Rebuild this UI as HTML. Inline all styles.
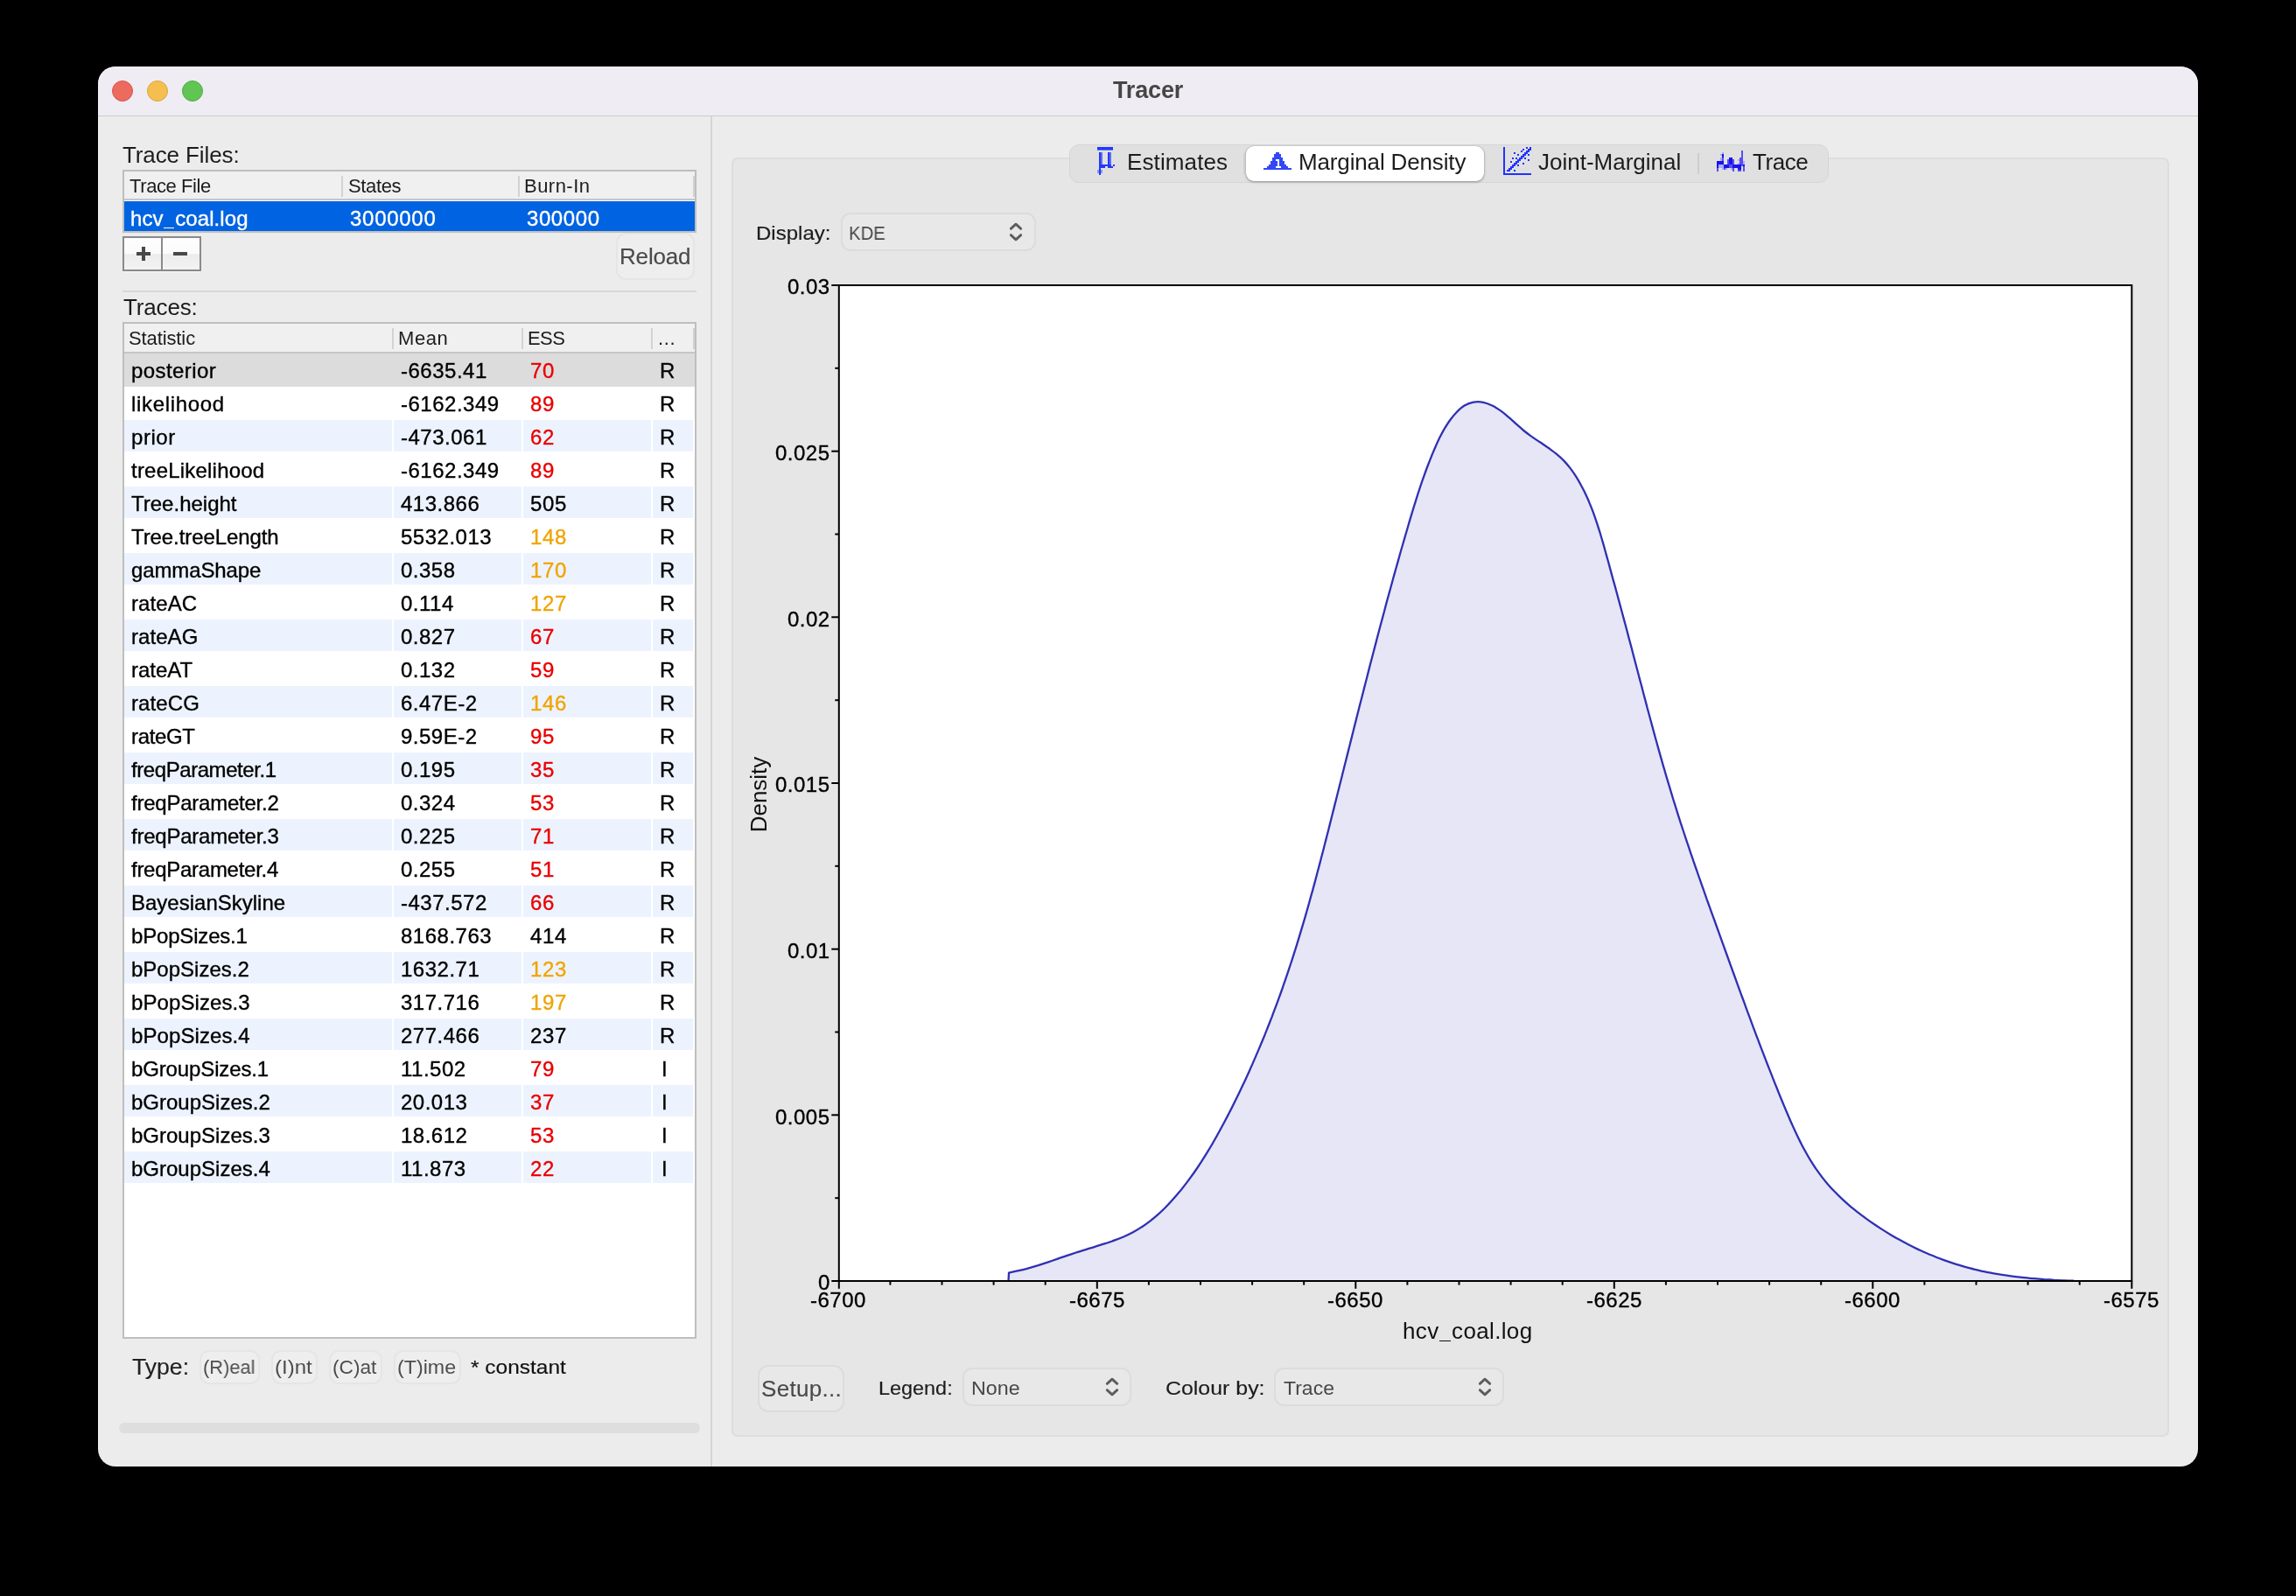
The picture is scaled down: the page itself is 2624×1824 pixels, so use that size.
<!DOCTYPE html>
<html lang="en">
<head>
<meta charset="utf-8">
<title>Tracer</title>
<style>
html,body{margin:0;padding:0;}
body{width:2624px;height:1824px;background:#000;position:relative;overflow:hidden;font-family:"Liberation Sans",sans-serif;}
div,span,svg{position:absolute;box-sizing:border-box;}
.t{will-change:transform;white-space:nowrap;line-height:1;display:block;}
.win{left:112px;top:76px;width:2400px;height:1600px;border-radius:20px;background:#ececec;overflow:hidden;}
.titlebar{left:0;top:0;width:2400px;height:57.3px;background:#efecf3;border-bottom:1.3px solid #cbcbc9;}
.light{border-radius:50%;width:24px;height:24px;top:92px;}
.tbl{border:2px solid #bebebe;background:#fff;}
.hdr{background:#f0f0f0;border-bottom:2px solid #c6c6c6;}
.sep{width:2px;background:#d2d2d2;}
.btn{border:2px solid #e5e5e5;border-radius:11px;background:#eeeeee;}
.btn2{border:2px solid #dcdcdc;border-radius:12px;background:#e8e8e8;}
.combo{border:2px solid #dcdcdc;border-radius:11px;background:#e8e8e8;}
.cell{background:#edf3fe;height:36px;}
.b{-webkit-text-stroke:0.35px currentColor;}
.b2{-webkit-text-stroke:0.15px currentColor;}
.us{position:static;display:inline-block;height:1.4px;background:currentColor;vertical-align:-3.2px;margin:0 0.03em;}
</style>
</head>
<body>

<div class="win"><div class="titlebar"></div></div>
<div class="light" style="left:128px;background:#ed6a5e;border:1px solid #d8544a;"></div>
<div class="light" style="left:168px;background:#f5bf4f;border:1px solid #dba63c;"></div>
<div class="light" style="left:208px;background:#61c554;border:1px solid #4fae42;"></div>
<span class="t" style="left:1271.6px;top:90px;font-size:27px;color:#464646;font-weight:bold;letter-spacing:-0.14px;">Tracer</span>
<div style="left:812px;top:133px;width:2px;height:1543px;background:#d6d6d6;"></div>
<span class="t" style="left:140.4px;top:164px;font-size:26px;color:#1c1c1c;letter-spacing:-0.11px;">Trace Files:</span>
<div class="tbl" style="left:140px;top:194px;width:656px;height:72px;"></div>
<div class="hdr" style="left:142px;top:196px;width:652px;height:33px;"></div>
<div class="sep" style="left:390px;top:201px;width:2px;height:24px;"></div>
<div class="sep" style="left:592px;top:201px;width:2px;height:24px;"></div>
<div class="sep" style="left:792px;top:201px;width:2px;height:24px;"></div>
<span class="t" style="left:148.4px;top:202px;font-size:22px;color:#1c1c1c;letter-spacing:-0.41px;">Trace File</span>
<span class="t" style="left:397.5px;top:202px;font-size:22px;color:#1c1c1c;letter-spacing:-0.36px;">States</span>
<span class="t" style="left:599.2px;top:202px;font-size:22px;color:#1c1c1c;letter-spacing:0.47px;">Burn-In</span>
<div style="left:142px;top:230px;width:652px;height:34px;background:#0063e1;"></div>
<span class="t b" style="left:149.4px;top:238px;font-size:24px;color:#fff;letter-spacing:0.11px;">hcv<i class="us" style="width:12.0px"></i>coal.log</span>
<span class="t b" style="left:399.9px;top:238px;font-size:24px;color:#fff;letter-spacing:0.72px;">3000000</span>
<span class="t b" style="left:601.7px;top:238px;font-size:24px;color:#fff;letter-spacing:0.58px;">300000</span>
<div style="left:140px;top:270px;width:90px;height:40px;border:2px solid #8a8a8a;background:linear-gradient(#fdfdfd,#fbfbfb 49%,#ececec 52%,#f3f3f3);box-shadow:0 1.5px 0 #f4f4f4;"></div>
<div style="left:184px;top:272px;width:2px;height:36px;background:#8a8a8a;"></div>
<div style="left:156px;top:288px;width:16px;height:4px;background:#484848;"></div>
<div style="left:162px;top:282px;width:4px;height:16px;background:#484848;"></div>
<div style="left:198px;top:288px;width:16px;height:4px;background:#484848;"></div>
<div class="btn" style="left:704.2px;top:266.4px;width:89.4px;height:53.4px;"></div>
<span class="t b2" style="left:707.8px;top:280px;font-size:26px;color:#4a4a4a;letter-spacing:-0.18px;">Reload</span>
<div style="left:140px;top:332px;width:656px;height:2px;background:#d8d8d8;"></div>
<span class="t" style="left:141.2px;top:338px;font-size:26px;color:#1c1c1c;letter-spacing:-0.15px;">Traces:</span>
<div class="tbl" style="left:140px;top:368px;width:656px;height:1162px;"></div>
<div class="hdr" style="left:142px;top:370px;width:652px;height:34px;"></div>
<div class="sep" style="left:448px;top:375px;width:2px;height:24px;"></div>
<div class="sep" style="left:596px;top:375px;width:2px;height:24px;"></div>
<div class="sep" style="left:744px;top:375px;width:2px;height:24px;"></div>
<div class="sep" style="left:792px;top:375px;width:2px;height:24px;"></div>
<span class="t" style="left:147.4px;top:376px;font-size:22px;color:#1c1c1c;letter-spacing:-0.11px;">Statistic</span>
<span class="t" style="left:455.2px;top:376px;font-size:22px;color:#1c1c1c;letter-spacing:0.57px;">Mean</span>
<span class="t" style="left:603.2px;top:376px;font-size:22px;color:#1c1c1c;letter-spacing:-0.55px;">ESS</span>
<span class="t" style="left:751.5px;top:376px;font-size:22px;color:#1c1c1c;letter-spacing:0.6px;">...</span>
<div style="left:142px;top:404px;width:652px;height:38px;background:#dcdcdc;"></div>
<span class="t b" style="left:149.6px;top:412px;font-size:24px;letter-spacing:0.43px;">posterior</span>
<span class="t b" style="left:458.2px;top:412px;font-size:24px;letter-spacing:0.5px;">-6635.41</span>
<span class="t b" style="left:606.4px;top:412px;font-size:24px;color:#e90000;letter-spacing:0.6px;">70</span>
<span class="t b" style="left:754.1px;top:412px;font-size:24px;">R</span>
<span class="t b" style="left:149.6px;top:450px;font-size:24px;letter-spacing:0.66px;">likelihood</span>
<span class="t b" style="left:458.2px;top:450px;font-size:24px;letter-spacing:0.5px;">-6162.349</span>
<span class="t b" style="left:606.4px;top:450px;font-size:24px;color:#e90000;letter-spacing:0.6px;">89</span>
<span class="t b" style="left:754.1px;top:450px;font-size:24px;">R</span>
<div class="cell" style="left:142px;top:480px;width:306px;height:36px;"></div>
<div class="cell" style="left:450px;top:480px;width:146px;height:36px;"></div>
<div class="cell" style="left:598px;top:480px;width:146px;height:36px;"></div>
<div class="cell" style="left:746px;top:480px;width:46px;height:36px;"></div>
<span class="t b" style="left:149.6px;top:488px;font-size:24px;letter-spacing:0.53px;">prior</span>
<span class="t b" style="left:458.2px;top:488px;font-size:24px;letter-spacing:0.5px;">-473.061</span>
<span class="t b" style="left:606.4px;top:488px;font-size:24px;color:#e90000;letter-spacing:0.6px;">62</span>
<span class="t b" style="left:754.1px;top:488px;font-size:24px;">R</span>
<span class="t b" style="left:149.6px;top:526px;font-size:24px;letter-spacing:0.21px;">treeLikelihood</span>
<span class="t b" style="left:458.2px;top:526px;font-size:24px;letter-spacing:0.5px;">-6162.349</span>
<span class="t b" style="left:606.4px;top:526px;font-size:24px;color:#e90000;letter-spacing:0.6px;">89</span>
<span class="t b" style="left:754.1px;top:526px;font-size:24px;">R</span>
<div class="cell" style="left:142px;top:556px;width:306px;height:36px;"></div>
<div class="cell" style="left:450px;top:556px;width:146px;height:36px;"></div>
<div class="cell" style="left:598px;top:556px;width:146px;height:36px;"></div>
<div class="cell" style="left:746px;top:556px;width:46px;height:36px;"></div>
<span class="t b" style="left:149.6px;top:564px;font-size:24px;">Tree.height</span>
<span class="t b" style="left:458.2px;top:564px;font-size:24px;letter-spacing:0.5px;">413.866</span>
<span class="t b" style="left:606.4px;top:564px;font-size:24px;letter-spacing:0.6px;">505</span>
<span class="t b" style="left:754.1px;top:564px;font-size:24px;">R</span>
<span class="t b" style="left:149.6px;top:602px;font-size:24px;letter-spacing:-0.09px;">Tree.treeLength</span>
<span class="t b" style="left:458.2px;top:602px;font-size:24px;letter-spacing:0.5px;">5532.013</span>
<span class="t b" style="left:606.4px;top:602px;font-size:24px;color:#f0a400;letter-spacing:0.6px;">148</span>
<span class="t b" style="left:754.1px;top:602px;font-size:24px;">R</span>
<div class="cell" style="left:142px;top:632px;width:306px;height:36px;"></div>
<div class="cell" style="left:450px;top:632px;width:146px;height:36px;"></div>
<div class="cell" style="left:598px;top:632px;width:146px;height:36px;"></div>
<div class="cell" style="left:746px;top:632px;width:46px;height:36px;"></div>
<span class="t b" style="left:149.6px;top:640px;font-size:24px;letter-spacing:-0.12px;">gammaShape</span>
<span class="t b" style="left:458.2px;top:640px;font-size:24px;letter-spacing:0.5px;">0.358</span>
<span class="t b" style="left:606.4px;top:640px;font-size:24px;color:#f0a400;letter-spacing:0.6px;">170</span>
<span class="t b" style="left:754.1px;top:640px;font-size:24px;">R</span>
<span class="t b" style="left:149.6px;top:678px;font-size:24px;letter-spacing:0.08px;">rateAC</span>
<span class="t b" style="left:458.2px;top:678px;font-size:24px;letter-spacing:0.5px;">0.114</span>
<span class="t b" style="left:606.4px;top:678px;font-size:24px;color:#f0a400;letter-spacing:0.6px;">127</span>
<span class="t b" style="left:754.1px;top:678px;font-size:24px;">R</span>
<div class="cell" style="left:142px;top:708px;width:306px;height:36px;"></div>
<div class="cell" style="left:450px;top:708px;width:146px;height:36px;"></div>
<div class="cell" style="left:598px;top:708px;width:146px;height:36px;"></div>
<div class="cell" style="left:746px;top:708px;width:46px;height:36px;"></div>
<span class="t b" style="left:149.6px;top:716px;font-size:24px;letter-spacing:0.06px;">rateAG</span>
<span class="t b" style="left:458.2px;top:716px;font-size:24px;letter-spacing:0.5px;">0.827</span>
<span class="t b" style="left:606.4px;top:716px;font-size:24px;color:#e90000;letter-spacing:0.6px;">67</span>
<span class="t b" style="left:754.1px;top:716px;font-size:24px;">R</span>
<span class="t b" style="left:149.6px;top:754px;font-size:24px;">rateAT</span>
<span class="t b" style="left:458.2px;top:754px;font-size:24px;letter-spacing:0.5px;">0.132</span>
<span class="t b" style="left:606.4px;top:754px;font-size:24px;color:#e90000;letter-spacing:0.6px;">59</span>
<span class="t b" style="left:754.1px;top:754px;font-size:24px;">R</span>
<div class="cell" style="left:142px;top:784px;width:306px;height:36px;"></div>
<div class="cell" style="left:450px;top:784px;width:146px;height:36px;"></div>
<div class="cell" style="left:598px;top:784px;width:146px;height:36px;"></div>
<div class="cell" style="left:746px;top:784px;width:46px;height:36px;"></div>
<span class="t b" style="left:149.6px;top:792px;font-size:24px;letter-spacing:0.1px;">rateCG</span>
<span class="t b" style="left:458.2px;top:792px;font-size:24px;letter-spacing:0.5px;">6.47E-2</span>
<span class="t b" style="left:606.4px;top:792px;font-size:24px;color:#f0a400;letter-spacing:0.6px;">146</span>
<span class="t b" style="left:754.1px;top:792px;font-size:24px;">R</span>
<span class="t b" style="left:149.6px;top:830px;font-size:24px;letter-spacing:-0.34px;">rateGT</span>
<span class="t b" style="left:458.2px;top:830px;font-size:24px;letter-spacing:0.5px;">9.59E-2</span>
<span class="t b" style="left:606.4px;top:830px;font-size:24px;color:#e90000;letter-spacing:0.6px;">95</span>
<span class="t b" style="left:754.1px;top:830px;font-size:24px;">R</span>
<div class="cell" style="left:142px;top:860px;width:306px;height:36px;"></div>
<div class="cell" style="left:450px;top:860px;width:146px;height:36px;"></div>
<div class="cell" style="left:598px;top:860px;width:146px;height:36px;"></div>
<div class="cell" style="left:746px;top:860px;width:46px;height:36px;"></div>
<span class="t b" style="left:149.6px;top:868px;font-size:24px;letter-spacing:-0.43px;">freqParameter.1</span>
<span class="t b" style="left:458.2px;top:868px;font-size:24px;letter-spacing:0.5px;">0.195</span>
<span class="t b" style="left:606.4px;top:868px;font-size:24px;color:#e90000;letter-spacing:0.6px;">35</span>
<span class="t b" style="left:754.1px;top:868px;font-size:24px;">R</span>
<span class="t b" style="left:149.6px;top:906px;font-size:24px;letter-spacing:-0.24px;">freqParameter.2</span>
<span class="t b" style="left:458.2px;top:906px;font-size:24px;letter-spacing:0.5px;">0.324</span>
<span class="t b" style="left:606.4px;top:906px;font-size:24px;color:#e90000;letter-spacing:0.6px;">53</span>
<span class="t b" style="left:754.1px;top:906px;font-size:24px;">R</span>
<div class="cell" style="left:142px;top:936px;width:306px;height:36px;"></div>
<div class="cell" style="left:450px;top:936px;width:146px;height:36px;"></div>
<div class="cell" style="left:598px;top:936px;width:146px;height:36px;"></div>
<div class="cell" style="left:746px;top:936px;width:46px;height:36px;"></div>
<span class="t b" style="left:149.6px;top:944px;font-size:24px;letter-spacing:-0.23px;">freqParameter.3</span>
<span class="t b" style="left:458.2px;top:944px;font-size:24px;letter-spacing:0.5px;">0.225</span>
<span class="t b" style="left:606.4px;top:944px;font-size:24px;color:#e90000;letter-spacing:0.6px;">71</span>
<span class="t b" style="left:754.1px;top:944px;font-size:24px;">R</span>
<span class="t b" style="left:149.6px;top:982px;font-size:24px;letter-spacing:-0.27px;">freqParameter.4</span>
<span class="t b" style="left:458.2px;top:982px;font-size:24px;letter-spacing:0.5px;">0.255</span>
<span class="t b" style="left:606.4px;top:982px;font-size:24px;color:#e90000;letter-spacing:0.6px;">51</span>
<span class="t b" style="left:754.1px;top:982px;font-size:24px;">R</span>
<div class="cell" style="left:142px;top:1012px;width:306px;height:36px;"></div>
<div class="cell" style="left:450px;top:1012px;width:146px;height:36px;"></div>
<div class="cell" style="left:598px;top:1012px;width:146px;height:36px;"></div>
<div class="cell" style="left:746px;top:1012px;width:46px;height:36px;"></div>
<span class="t b" style="left:149.6px;top:1020px;font-size:24px;">BayesianSkyline</span>
<span class="t b" style="left:458.2px;top:1020px;font-size:24px;letter-spacing:0.5px;">-437.572</span>
<span class="t b" style="left:606.4px;top:1020px;font-size:24px;color:#e90000;letter-spacing:0.6px;">66</span>
<span class="t b" style="left:754.1px;top:1020px;font-size:24px;">R</span>
<span class="t b" style="left:149.6px;top:1058px;font-size:24px;letter-spacing:-0.18px;">bPopSizes.1</span>
<span class="t b" style="left:458.2px;top:1058px;font-size:24px;letter-spacing:0.5px;">8168.763</span>
<span class="t b" style="left:606.4px;top:1058px;font-size:24px;letter-spacing:0.6px;">414</span>
<span class="t b" style="left:754.1px;top:1058px;font-size:24px;">R</span>
<div class="cell" style="left:142px;top:1088px;width:306px;height:36px;"></div>
<div class="cell" style="left:450px;top:1088px;width:146px;height:36px;"></div>
<div class="cell" style="left:598px;top:1088px;width:146px;height:36px;"></div>
<div class="cell" style="left:746px;top:1088px;width:46px;height:36px;"></div>
<span class="t b" style="left:149.6px;top:1096px;font-size:24px;">bPopSizes.2</span>
<span class="t b" style="left:458.2px;top:1096px;font-size:24px;letter-spacing:0.5px;">1632.71</span>
<span class="t b" style="left:606.4px;top:1096px;font-size:24px;color:#f0a400;letter-spacing:0.6px;">123</span>
<span class="t b" style="left:754.1px;top:1096px;font-size:24px;">R</span>
<span class="t b" style="left:149.6px;top:1134px;font-size:24px;letter-spacing:0.09px;">bPopSizes.3</span>
<span class="t b" style="left:458.2px;top:1134px;font-size:24px;letter-spacing:0.5px;">317.716</span>
<span class="t b" style="left:606.4px;top:1134px;font-size:24px;color:#f0a400;letter-spacing:0.6px;">197</span>
<span class="t b" style="left:754.1px;top:1134px;font-size:24px;">R</span>
<div class="cell" style="left:142px;top:1164px;width:306px;height:36px;"></div>
<div class="cell" style="left:450px;top:1164px;width:146px;height:36px;"></div>
<div class="cell" style="left:598px;top:1164px;width:146px;height:36px;"></div>
<div class="cell" style="left:746px;top:1164px;width:46px;height:36px;"></div>
<span class="t b" style="left:149.6px;top:1172px;font-size:24px;letter-spacing:0.09px;">bPopSizes.4</span>
<span class="t b" style="left:458.2px;top:1172px;font-size:24px;letter-spacing:0.5px;">277.466</span>
<span class="t b" style="left:606.4px;top:1172px;font-size:24px;letter-spacing:0.6px;">237</span>
<span class="t b" style="left:754.1px;top:1172px;font-size:24px;">R</span>
<span class="t b" style="left:149.6px;top:1210px;font-size:24px;letter-spacing:-0.13px;">bGroupSizes.1</span>
<span class="t b" style="left:458.2px;top:1210px;font-size:24px;letter-spacing:0.5px;">11.502</span>
<span class="t b" style="left:606.4px;top:1210px;font-size:24px;color:#e90000;letter-spacing:0.6px;">79</span>
<span class="t b" style="left:756.2px;top:1210px;font-size:24px;">I</span>
<div class="cell" style="left:142px;top:1240px;width:306px;height:36px;"></div>
<div class="cell" style="left:450px;top:1240px;width:146px;height:36px;"></div>
<div class="cell" style="left:598px;top:1240px;width:146px;height:36px;"></div>
<div class="cell" style="left:746px;top:1240px;width:46px;height:36px;"></div>
<span class="t b" style="left:149.6px;top:1248px;font-size:24px;">bGroupSizes.2</span>
<span class="t b" style="left:458.2px;top:1248px;font-size:24px;letter-spacing:0.5px;">20.013</span>
<span class="t b" style="left:606.4px;top:1248px;font-size:24px;color:#e90000;letter-spacing:0.6px;">37</span>
<span class="t b" style="left:756.2px;top:1248px;font-size:24px;">I</span>
<span class="t b" style="left:149.6px;top:1286px;font-size:24px;">bGroupSizes.3</span>
<span class="t b" style="left:458.2px;top:1286px;font-size:24px;letter-spacing:0.5px;">18.612</span>
<span class="t b" style="left:606.4px;top:1286px;font-size:24px;color:#e90000;letter-spacing:0.6px;">53</span>
<span class="t b" style="left:756.2px;top:1286px;font-size:24px;">I</span>
<div class="cell" style="left:142px;top:1316px;width:306px;height:36px;"></div>
<div class="cell" style="left:450px;top:1316px;width:146px;height:36px;"></div>
<div class="cell" style="left:598px;top:1316px;width:146px;height:36px;"></div>
<div class="cell" style="left:746px;top:1316px;width:46px;height:36px;"></div>
<span class="t b" style="left:149.6px;top:1324px;font-size:24px;">bGroupSizes.4</span>
<span class="t b" style="left:458.2px;top:1324px;font-size:24px;letter-spacing:0.5px;">11.873</span>
<span class="t b" style="left:606.4px;top:1324px;font-size:24px;color:#e90000;letter-spacing:0.6px;">22</span>
<span class="t b" style="left:756.2px;top:1324px;font-size:24px;">I</span>
<span class="t b2" style="left:151.2px;top:1549px;font-size:26px;color:#222;transform:scaleX(1.023);transform-origin:0 0;">Type:</span>
<div class="btn" style="left:227.5px;top:1542.8px;width:69px;height:39px;"></div>
<span class="t" style="left:232.3px;top:1552px;font-size:22px;color:#4d4d4d;transform:scaleX(0.9931);transform-origin:0 0;">(R)eal</span>
<div class="btn" style="left:309.6px;top:1542.8px;width:53px;height:39px;"></div>
<span class="t" style="left:314.2px;top:1552px;font-size:22px;color:#4d4d4d;transform:scaleX(1.0921);transform-origin:0 0;">(I)nt</span>
<div class="btn" style="left:375.5px;top:1542.8px;width:61px;height:39px;"></div>
<span class="t" style="left:380.1px;top:1552px;font-size:22px;color:#4d4d4d;transform:scaleX(1.0312);transform-origin:0 0;">(C)at</span>
<div class="btn" style="left:449.7px;top:1542.8px;width:77px;height:39px;"></div>
<span class="t" style="left:454.3px;top:1552px;font-size:22px;color:#4d4d4d;transform:scaleX(1.0565);transform-origin:0 0;">(T)ime</span>
<span class="t b2" style="left:538.1px;top:1552px;font-size:22px;color:#111;transform:scaleX(1.1124);transform-origin:0 0;">* constant</span>
<div style="left:136px;top:1626px;width:664px;height:12px;background:#dedede;border-radius:6px;"></div>
<div style="left:836px;top:180px;width:1643px;height:1462px;background:#e6e6e6;border:2px solid #dddddd;border-radius:7px;"></div>
<div style="left:1222px;top:165px;width:868px;height:44px;background:#e0e0e0;border:1px solid #d6d6d6;border-radius:11px;"></div>
<div style="left:1423.5px;top:167px;width:272.5px;height:40px;background:#fff;border-radius:9px;box-shadow:0 1px 3px rgba(0,0,0,0.35),0 0 1px rgba(0,0,0,0.3);"></div>
<div style="left:1940px;top:175px;width:2px;height:24px;background:#cdcdcd;"></div>
<div style="left:1421.4px;top:175px;width:1.6px;height:24px;background:#cfcfcf;"></div>
<span class="t" style="left:1287.9px;top:172px;font-size:26px;color:#1c1c1c;letter-spacing:0.12px;">Estimates</span>
<span class="t" style="left:1483.9px;top:172px;font-size:26px;color:#1c1c1c;letter-spacing:-0.15px;">Marginal Density</span>
<span class="t" style="left:1758.0px;top:172px;font-size:26px;color:#1c1c1c;">Joint-Marginal</span>
<span class="t" style="left:2002.8px;top:172px;font-size:26px;color:#1c1c1c;letter-spacing:-0.43px;">Trace</span>
<svg style="left:1254px;top:168px;width:22px;height:34px" viewBox="0 0 22 34" shape-rendering="crispEdges"><g fill="#2337fb"><rect x="0" y="0" width="18" height="4"/><rect x="2" y="6" width="2" height="18"/><rect x="2" y="24" width="2" height="8"/><rect x="12" y="6" width="2" height="18"/><rect x="2" y="20" width="14" height="2"/><rect x="4" y="22" width="5" height="2"/><rect x="14" y="22" width="4" height="2"/><rect x="18" y="20" width="2" height="2"/></g><g fill="#5f70f3"><rect x="4" y="6" width="2" height="14"/><rect x="14" y="6" width="2" height="14"/><rect x="0" y="2.5" width="18" height="1" fill="#6676f5"/></g><g fill="#8a96f0"><rect x="0" y="26" width="2" height="4"/><rect x="4" y="26" width="2" height="4"/></g></svg>
<svg style="left:1444px;top:174px;width:32px;height:20px" viewBox="0 0 32 20" shape-rendering="crispEdges"><g fill="#3248f6"><rect x="0" y="18" width="32" height="2"/><rect x="4" y="16" width="24" height="2"/><rect x="6" y="14" width="20" height="2"/><rect x="8" y="10" width="16" height="4"/><rect x="10" y="6" width="12" height="4"/><rect x="12" y="2" width="8" height="4"/><rect x="14" y="0" width="4" height="2"/></g><g fill="#fff"><rect x="14" y="8" width="4" height="2"/><rect x="16" y="8" width="2" height="8"/><rect x="14" y="16" width="6" height="2"/></g></svg>
<svg style="left:1718px;top:168px;width:32px;height:32px" viewBox="0 0 32 32" shape-rendering="crispEdges"><g fill="#2032ff"><rect x="0" y="0" width="2" height="32"/><rect x="0" y="30" width="32" height="2"/><rect x="30" y="0" width="2" height="2"/><rect x="28" y="2" width="4" height="2"/><rect x="26" y="4" width="4" height="2"/><rect x="24" y="6" width="4" height="2"/><rect x="22" y="8" width="4" height="2"/><rect x="20" y="10" width="4" height="2"/><rect x="18" y="12" width="4" height="2"/><rect x="16" y="14" width="4" height="2"/><rect x="14" y="16" width="4" height="2"/><rect x="12" y="18" width="4" height="2"/><rect x="10" y="20" width="4" height="2"/><rect x="8" y="22" width="4" height="2"/><rect x="6" y="24" width="4" height="2"/><rect x="4" y="26" width="4" height="2"/><rect x="26" y="0" width="2" height="2"/><rect x="22" y="2" width="2" height="2"/><rect x="20" y="4" width="2" height="2"/><rect x="12" y="6" width="2" height="2"/><rect x="16" y="8" width="2" height="2"/><rect x="28" y="8" width="2" height="2"/><rect x="10" y="12" width="2" height="2"/><rect x="14" y="12" width="2" height="2"/><rect x="24" y="12" width="2" height="2"/><rect x="28" y="14" width="2" height="2"/><rect x="8" y="16" width="2" height="2"/><rect x="22" y="18" width="2" height="2"/><rect x="16" y="20" width="2" height="2"/><rect x="12" y="26" width="2" height="2"/></g></svg>
<svg style="left:1962px;top:172px;width:32px;height:24px" viewBox="0 0 32 24" shape-rendering="crispEdges"><g fill="#a9acf6"><rect x="4" y="4" width="2" height="2"/><rect x="6" y="2" width="2" height="2"/><rect x="4" y="8" width="2" height="4"/><rect x="2" y="16" width="6" height="4"/><rect x="10" y="20" width="2" height="2"/><rect x="16" y="20" width="2" height="2"/><rect x="24" y="10" width="2" height="2"/><rect x="24" y="14" width="2" height="2"/><rect x="30" y="12" width="2" height="4"/><rect x="6" y="20" width="2" height="2"/></g><g fill="#5a4fee"><rect x="0" y="20" width="2" height="4"/><rect x="6" y="8" width="2" height="4"/><rect x="18" y="10" width="2" height="6"/><rect x="26" y="8" width="2" height="8"/><rect x="28" y="0" width="2" height="18"/><rect x="8" y="20" width="2" height="2"/><rect x="18" y="20" width="2" height="4"/><rect x="14" y="16" width="4" height="4"/><rect x="24" y="22" width="4" height="2"/><rect x="30" y="18" width="2" height="6"/><rect x="12" y="10" width="2" height="6"/></g><g fill="#1b12ee"><rect x="0" y="12" width="2" height="8"/><rect x="2" y="12" width="6" height="4"/><rect x="6" y="4" width="2" height="4"/><rect x="8" y="16" width="6" height="4"/><rect x="14" y="8" width="4" height="8"/><rect x="18" y="16" width="6" height="4"/><rect x="24" y="16" width="4" height="6"/><rect x="30" y="16" width="2" height="2"/><rect x="12" y="16" width="2" height="4"/><rect x="20" y="16" width="4" height="4"/></g></svg>
<span class="t b2" style="left:863.8px;top:256px;font-size:22px;color:#1c1c1c;transform:scaleX(1.0919);transform-origin:0 0;">Display:</span>
<div class="combo" style="left:960.5px;top:243px;width:223px;height:44px;"></div>
<span class="t" style="left:970.2px;top:256px;font-size:22px;color:#474747;transform:scaleX(0.9238);transform-origin:0 0;">KDE</span>
<svg style="left:1151px;top:250.89999999999998px;width:20px;height:28px" viewBox="-10 -14 20 28"><path d="M-5.7 -3.6 L0 -8.9 L5.7 -3.6 M-5.7 3.6 L0 8.9 L5.7 3.6" fill="none" stroke="#5c5c5c" stroke-width="2.8" stroke-linecap="round" stroke-linejoin="round"/></svg>
<svg style="left:0;top:0;width:2624px;height:1824px" viewBox="0 0 2624 1824"><rect x="958.8" y="326.0" width="1477.5000000000002" height="1138.0" fill="#fff"/><path d="M1152.5 1464 L1153.0 1454.6  C1154.9 1454.2 1160.6 1453.1 1164.4 1452.2 C1168.1 1451.4 1171.8 1450.4 1175.5 1449.4 C1179.2 1448.4 1182.9 1447.3 1186.5 1446.2 C1190.1 1445.0 1193.7 1443.8 1197.3 1442.6 C1200.9 1441.4 1204.5 1440.1 1208.1 1438.9 C1211.7 1437.6 1215.3 1436.3 1218.9 1435.1 C1222.5 1433.9 1226.2 1432.7 1229.8 1431.5 C1233.5 1430.3 1237.2 1429.2 1240.9 1428.1 C1244.6 1427.0 1248.3 1425.9 1252.0 1424.7 C1255.7 1423.6 1259.4 1422.4 1263.1 1421.2 C1266.7 1420.0 1270.4 1418.8 1274.0 1417.4 C1277.6 1416.1 1281.1 1414.7 1284.6 1413.2 C1288.1 1411.6 1291.5 1410.0 1294.9 1408.2 C1298.2 1406.4 1301.5 1404.5 1304.6 1402.4 C1307.8 1400.4 1310.9 1398.1 1313.9 1395.8 C1316.9 1393.5 1319.9 1391.1 1322.7 1388.6 C1325.6 1386.0 1328.4 1383.4 1331.1 1380.7 C1333.9 1378.0 1336.5 1375.2 1339.1 1372.3 C1341.7 1369.5 1344.2 1366.6 1346.7 1363.6 C1349.2 1360.7 1351.6 1357.7 1353.9 1354.6 C1356.3 1351.6 1358.6 1348.5 1360.8 1345.4 C1363.1 1342.3 1365.3 1339.2 1367.5 1336.0 C1369.6 1332.8 1371.7 1329.6 1373.8 1326.4 C1375.9 1323.2 1377.9 1320.0 1379.9 1316.7 C1381.9 1313.4 1383.8 1310.1 1385.8 1306.8 C1387.7 1303.5 1389.6 1300.2 1391.4 1296.8 C1393.3 1293.5 1395.1 1290.1 1396.9 1286.7 C1398.8 1283.4 1400.5 1280.0 1402.3 1276.6 C1404.1 1273.2 1405.8 1269.8 1407.6 1266.4 C1409.3 1262.9 1411.0 1259.5 1412.7 1256.1 C1414.4 1252.6 1416.0 1249.2 1417.7 1245.7 C1419.3 1242.3 1421.0 1238.8 1422.6 1235.4 C1424.2 1231.9 1425.8 1228.4 1427.4 1224.9 C1429.0 1221.4 1430.5 1217.9 1432.1 1214.4 C1433.6 1210.9 1435.1 1207.4 1436.6 1203.9 C1438.1 1200.4 1439.6 1196.8 1441.1 1193.3 C1442.6 1189.8 1444.0 1186.2 1445.5 1182.7 C1446.9 1179.1 1448.3 1175.6 1449.7 1172.0 C1451.1 1168.5 1452.5 1164.9 1453.9 1161.3 C1455.2 1157.7 1456.6 1154.1 1457.9 1150.6 C1459.3 1147.0 1460.6 1143.4 1461.9 1139.8 C1463.2 1136.2 1464.5 1132.6 1465.8 1129.0 C1467.0 1125.3 1468.3 1121.7 1469.5 1118.1 C1470.8 1114.5 1472.0 1110.8 1473.2 1107.2 C1474.4 1103.6 1475.6 1099.9 1476.8 1096.3 C1478.0 1092.7 1479.1 1089.0 1480.3 1085.4 C1481.4 1081.7 1482.6 1078.0 1483.7 1074.4 C1484.8 1070.7 1485.9 1067.1 1487.0 1063.4 C1488.1 1059.7 1489.2 1056.1 1490.3 1052.4 C1491.4 1048.7 1492.4 1045.0 1493.5 1041.3 C1494.5 1037.7 1495.6 1034.0 1496.6 1030.3 C1497.6 1026.6 1498.6 1022.9 1499.7 1019.2 C1500.7 1015.5 1501.7 1011.8 1502.7 1008.1 C1503.7 1004.4 1504.7 1000.7 1505.6 997.0 C1506.6 993.3 1507.6 989.6 1508.6 985.9 C1509.5 982.2 1510.5 978.5 1511.5 974.8 C1512.4 971.1 1513.4 967.4 1514.3 963.7 C1515.3 960.0 1516.2 956.2 1517.2 952.5 C1518.1 948.8 1519.1 945.1 1520.0 941.4 C1520.9 937.7 1521.9 934.0 1522.8 930.2 C1523.8 926.5 1524.7 922.8 1525.6 919.1 C1526.6 915.4 1527.5 911.7 1528.4 908.0 C1529.4 904.2 1530.3 900.5 1531.2 896.8 C1532.2 893.1 1533.1 889.4 1534.0 885.7 C1534.9 881.9 1535.9 878.2 1536.8 874.5 C1537.7 870.8 1538.7 867.1 1539.6 863.4 C1540.5 859.6 1541.5 855.9 1542.4 852.2 C1543.3 848.5 1544.3 844.8 1545.2 841.1 C1546.1 837.4 1547.1 833.6 1548.0 829.9 C1548.9 826.2 1549.9 822.5 1550.8 818.8 C1551.8 815.1 1552.7 811.4 1553.6 807.6 C1554.6 803.9 1555.5 800.2 1556.5 796.5 C1557.4 792.8 1558.4 789.1 1559.3 785.4 C1560.3 781.7 1561.2 778.0 1562.2 774.2 C1563.1 770.5 1564.1 766.8 1565.0 763.1 C1566.0 759.4 1566.9 755.7 1567.9 752.0 C1568.9 748.3 1569.8 744.6 1570.8 740.9 C1571.8 737.2 1572.7 733.5 1573.7 729.8 C1574.7 726.1 1575.6 722.4 1576.6 718.7 C1577.6 715.0 1578.6 711.3 1579.6 707.6 C1580.6 703.9 1581.6 700.2 1582.6 696.5 C1583.5 692.8 1584.5 689.1 1585.5 685.4 C1586.6 681.7 1587.6 678.0 1588.6 674.3 C1589.6 670.6 1590.6 666.9 1591.6 663.2 C1592.6 659.5 1593.7 655.8 1594.7 652.1 C1595.7 648.5 1596.8 644.8 1597.8 641.1 C1598.8 637.4 1599.9 633.7 1600.9 630.0 C1602.0 626.3 1603.0 622.7 1604.1 619.0 C1605.2 615.3 1606.2 611.6 1607.3 608.0 C1608.4 604.3 1609.4 600.6 1610.5 596.9 C1611.6 593.3 1612.7 589.6 1613.8 585.9 C1614.9 582.3 1616.0 578.6 1617.2 574.9 C1618.3 571.3 1619.5 567.6 1620.6 564.0 C1621.8 560.3 1623.0 556.7 1624.2 553.1 C1625.5 549.5 1626.7 545.9 1628.0 542.3 C1629.3 538.7 1630.6 535.1 1632.0 531.5 C1633.4 527.9 1634.8 524.4 1636.2 520.8 C1637.7 517.3 1639.1 513.7 1640.7 510.2 C1642.2 506.7 1643.8 503.2 1645.5 499.8 C1647.3 496.4 1649.0 493.0 1651.0 489.7 C1653.0 486.4 1655.0 483.1 1657.3 480.0 C1659.6 476.9 1662.1 473.8 1664.8 471.0 C1667.5 468.3 1670.4 465.5 1673.6 463.6 C1676.8 461.7 1680.4 460.3 1684.0 459.6 C1687.6 459.0 1691.5 459.1 1695.1 459.8 C1698.8 460.5 1702.5 462.1 1705.9 463.7 C1709.3 465.4 1712.6 467.7 1715.7 469.9 C1718.8 472.1 1721.7 474.7 1724.6 477.2 C1727.5 479.7 1730.3 482.3 1733.2 484.9 C1736.1 487.4 1738.9 490.0 1741.9 492.5 C1744.9 494.9 1748.0 497.1 1751.1 499.4 C1754.3 501.6 1757.5 503.7 1760.7 505.8 C1763.9 508.0 1767.1 510.1 1770.2 512.3 C1773.3 514.6 1776.3 516.8 1779.2 519.2 C1782.2 521.7 1785.0 524.2 1787.6 526.9 C1790.2 529.7 1792.7 532.6 1795.0 535.6 C1797.3 538.7 1799.5 541.9 1801.5 545.1 C1803.6 548.4 1805.5 551.8 1807.3 555.2 C1809.2 558.6 1810.9 562.1 1812.5 565.6 C1814.1 569.0 1815.7 572.6 1817.1 576.1 C1818.6 579.6 1819.9 583.2 1821.3 586.8 C1822.6 590.4 1823.8 594.0 1825.0 597.6 C1826.2 601.2 1827.3 604.8 1828.5 608.5 C1829.6 612.1 1830.6 615.8 1831.7 619.4 C1832.8 623.1 1833.8 626.8 1834.8 630.5 C1835.8 634.1 1836.8 637.8 1837.9 641.5 C1838.9 645.2 1839.9 648.9 1840.9 652.6 C1841.9 656.3 1842.9 660.0 1843.9 663.7 C1845.0 667.4 1846.0 671.1 1847.0 674.8 C1848.0 678.5 1849.0 682.2 1850.0 685.9 C1851.0 689.6 1852.0 693.3 1853.0 697.0 C1854.0 700.7 1855.0 704.4 1856.0 708.1 C1857.0 711.8 1858.0 715.5 1859.0 719.3 C1860.0 723.0 1860.9 726.7 1861.9 730.4 C1862.9 734.1 1863.9 737.8 1864.9 741.5 C1865.8 745.2 1866.8 749.0 1867.8 752.7 C1868.8 756.4 1869.7 760.1 1870.7 763.8 C1871.7 767.5 1872.7 771.2 1873.6 774.9 C1874.6 778.6 1875.6 782.3 1876.6 786.0 C1877.5 789.7 1878.5 793.4 1879.5 797.1 C1880.5 800.8 1881.5 804.5 1882.4 808.2 C1883.4 811.9 1884.4 815.6 1885.4 819.3 C1886.4 823.0 1887.4 826.7 1888.4 830.4 C1889.4 834.1 1890.4 837.8 1891.4 841.5 C1892.4 845.2 1893.5 848.9 1894.5 852.6 C1895.5 856.3 1896.5 859.9 1897.6 863.6 C1898.6 867.3 1899.7 871.0 1900.7 874.7 C1901.8 878.3 1902.9 882.0 1903.9 885.7 C1905.0 889.4 1906.1 893.0 1907.2 896.7 C1908.3 900.4 1909.4 904.0 1910.5 907.7 C1911.6 911.3 1912.7 915.0 1913.9 918.7 C1915.0 922.3 1916.2 926.0 1917.3 929.6 C1918.5 933.3 1919.7 936.9 1920.8 940.6 C1922.0 944.2 1923.2 947.8 1924.4 951.5 C1925.6 955.1 1926.8 958.8 1928.0 962.4 C1929.3 966.0 1930.5 969.7 1931.7 973.3 C1932.9 976.9 1934.2 980.5 1935.4 984.2 C1936.7 987.8 1937.9 991.4 1939.2 995.0 C1940.4 998.7 1941.7 1002.3 1943.0 1005.9 C1944.2 1009.5 1945.5 1013.1 1946.8 1016.7 C1948.1 1020.4 1949.4 1024.0 1950.6 1027.6 C1951.9 1031.2 1953.2 1034.8 1954.5 1038.4 C1955.8 1042.0 1957.1 1045.6 1958.4 1049.2 C1959.7 1052.8 1961.0 1056.4 1962.3 1060.0 C1963.6 1063.6 1964.9 1067.3 1966.2 1070.9 C1967.5 1074.5 1968.8 1078.1 1970.1 1081.7 C1971.4 1085.3 1972.7 1088.9 1974.0 1092.5 C1975.3 1096.1 1976.6 1099.7 1977.9 1103.3 C1979.2 1106.9 1980.5 1110.5 1981.8 1114.0 C1983.1 1117.6 1984.4 1121.2 1985.7 1124.8 C1987.0 1128.4 1988.3 1132.0 1989.6 1135.6 C1990.9 1139.2 1992.3 1142.8 1993.6 1146.4 C1994.9 1150.0 1996.2 1153.6 1997.5 1157.2 C1998.9 1160.8 2000.2 1164.3 2001.5 1167.9 C2002.8 1171.5 2004.2 1175.1 2005.5 1178.7 C2006.9 1182.3 2008.2 1185.8 2009.6 1189.4 C2010.9 1193.0 2012.3 1196.6 2013.7 1200.2 C2015.0 1203.7 2016.4 1207.3 2017.8 1210.9 C2019.2 1214.5 2020.6 1218.0 2022.0 1221.6 C2023.4 1225.2 2024.8 1228.7 2026.2 1232.3 C2027.6 1235.9 2029.0 1239.4 2030.5 1243.0 C2031.9 1246.6 2033.3 1250.1 2034.8 1253.7 C2036.2 1257.2 2037.7 1260.8 2039.2 1264.4 C2040.7 1267.9 2042.2 1271.5 2043.7 1275.0 C2045.2 1278.5 2046.7 1282.1 2048.3 1285.6 C2049.9 1289.1 2051.5 1292.6 2053.1 1296.0 C2054.8 1299.5 2056.4 1303.0 2058.2 1306.4 C2059.9 1309.8 2061.7 1313.1 2063.6 1316.5 C2065.4 1319.8 2067.3 1323.1 2069.3 1326.3 C2071.3 1329.5 2073.4 1332.7 2075.5 1335.9 C2077.7 1339.0 2079.9 1342.1 2082.2 1345.1 C2084.5 1348.1 2086.9 1351.0 2089.4 1353.9 C2091.9 1356.8 2094.5 1359.6 2097.2 1362.3 C2099.8 1365.1 2102.6 1367.8 2105.4 1370.4 C2108.2 1373.0 2111.1 1375.6 2114.0 1378.1 C2117.0 1380.6 2120.0 1383.0 2123.0 1385.4 C2126.1 1387.8 2129.2 1390.1 2132.3 1392.4 C2135.4 1394.7 2138.6 1396.9 2141.8 1399.0 C2145.0 1401.2 2148.2 1403.3 2151.5 1405.4 C2154.7 1407.5 2158.0 1409.5 2161.3 1411.4 C2164.6 1413.4 2167.9 1415.3 2171.2 1417.1 C2174.6 1419.0 2178.0 1420.8 2181.4 1422.5 C2184.8 1424.3 2188.2 1426.0 2191.6 1427.6 C2195.1 1429.2 2198.5 1430.8 2202.0 1432.3 C2205.5 1433.8 2209.0 1435.3 2212.6 1436.7 C2216.1 1438.1 2219.7 1439.4 2223.2 1440.7 C2226.8 1442.0 2230.4 1443.2 2234.1 1444.4 C2237.7 1445.5 2241.3 1446.6 2245.0 1447.7 C2248.7 1448.7 2252.4 1449.7 2256.1 1450.6 C2259.8 1451.5 2263.5 1452.4 2267.3 1453.2 C2271.0 1454.0 2274.8 1454.7 2278.6 1455.4 C2282.4 1456.1 2286.2 1456.7 2290.0 1457.2 C2293.8 1457.8 2297.6 1458.3 2301.5 1458.8 C2305.3 1459.3 2309.1 1459.7 2313.0 1460.1 C2316.8 1460.5 2320.6 1460.9 2324.5 1461.2 C2328.3 1461.5 2332.1 1461.8 2335.9 1462.1 C2339.8 1462.3 2343.6 1462.5 2347.4 1462.8 C2351.2 1463.0 2355.0 1463.2 2358.8 1463.3 C2362.5 1463.5 2368.1 1463.6 2370.0 1463.6 L2370.2 1464 Z" fill="#e6e6f6"/><path d="M1152.5 1464 L1153.0 1454.6  C1154.9 1454.2 1160.6 1453.1 1164.4 1452.2 C1168.1 1451.4 1171.8 1450.4 1175.5 1449.4 C1179.2 1448.4 1182.9 1447.3 1186.5 1446.2 C1190.1 1445.0 1193.7 1443.8 1197.3 1442.6 C1200.9 1441.4 1204.5 1440.1 1208.1 1438.9 C1211.7 1437.6 1215.3 1436.3 1218.9 1435.1 C1222.5 1433.9 1226.2 1432.7 1229.8 1431.5 C1233.5 1430.3 1237.2 1429.2 1240.9 1428.1 C1244.6 1427.0 1248.3 1425.9 1252.0 1424.7 C1255.7 1423.6 1259.4 1422.4 1263.1 1421.2 C1266.7 1420.0 1270.4 1418.8 1274.0 1417.4 C1277.6 1416.1 1281.1 1414.7 1284.6 1413.2 C1288.1 1411.6 1291.5 1410.0 1294.9 1408.2 C1298.2 1406.4 1301.5 1404.5 1304.6 1402.4 C1307.8 1400.4 1310.9 1398.1 1313.9 1395.8 C1316.9 1393.5 1319.9 1391.1 1322.7 1388.6 C1325.6 1386.0 1328.4 1383.4 1331.1 1380.7 C1333.9 1378.0 1336.5 1375.2 1339.1 1372.3 C1341.7 1369.5 1344.2 1366.6 1346.7 1363.6 C1349.2 1360.7 1351.6 1357.7 1353.9 1354.6 C1356.3 1351.6 1358.6 1348.5 1360.8 1345.4 C1363.1 1342.3 1365.3 1339.2 1367.5 1336.0 C1369.6 1332.8 1371.7 1329.6 1373.8 1326.4 C1375.9 1323.2 1377.9 1320.0 1379.9 1316.7 C1381.9 1313.4 1383.8 1310.1 1385.8 1306.8 C1387.7 1303.5 1389.6 1300.2 1391.4 1296.8 C1393.3 1293.5 1395.1 1290.1 1396.9 1286.7 C1398.8 1283.4 1400.5 1280.0 1402.3 1276.6 C1404.1 1273.2 1405.8 1269.8 1407.6 1266.4 C1409.3 1262.9 1411.0 1259.5 1412.7 1256.1 C1414.4 1252.6 1416.0 1249.2 1417.7 1245.7 C1419.3 1242.3 1421.0 1238.8 1422.6 1235.4 C1424.2 1231.9 1425.8 1228.4 1427.4 1224.9 C1429.0 1221.4 1430.5 1217.9 1432.1 1214.4 C1433.6 1210.9 1435.1 1207.4 1436.6 1203.9 C1438.1 1200.4 1439.6 1196.8 1441.1 1193.3 C1442.6 1189.8 1444.0 1186.2 1445.5 1182.7 C1446.9 1179.1 1448.3 1175.6 1449.7 1172.0 C1451.1 1168.5 1452.5 1164.9 1453.9 1161.3 C1455.2 1157.7 1456.6 1154.1 1457.9 1150.6 C1459.3 1147.0 1460.6 1143.4 1461.9 1139.8 C1463.2 1136.2 1464.5 1132.6 1465.8 1129.0 C1467.0 1125.3 1468.3 1121.7 1469.5 1118.1 C1470.8 1114.5 1472.0 1110.8 1473.2 1107.2 C1474.4 1103.6 1475.6 1099.9 1476.8 1096.3 C1478.0 1092.7 1479.1 1089.0 1480.3 1085.4 C1481.4 1081.7 1482.6 1078.0 1483.7 1074.4 C1484.8 1070.7 1485.9 1067.1 1487.0 1063.4 C1488.1 1059.7 1489.2 1056.1 1490.3 1052.4 C1491.4 1048.7 1492.4 1045.0 1493.5 1041.3 C1494.5 1037.7 1495.6 1034.0 1496.6 1030.3 C1497.6 1026.6 1498.6 1022.9 1499.7 1019.2 C1500.7 1015.5 1501.7 1011.8 1502.7 1008.1 C1503.7 1004.4 1504.7 1000.7 1505.6 997.0 C1506.6 993.3 1507.6 989.6 1508.6 985.9 C1509.5 982.2 1510.5 978.5 1511.5 974.8 C1512.4 971.1 1513.4 967.4 1514.3 963.7 C1515.3 960.0 1516.2 956.2 1517.2 952.5 C1518.1 948.8 1519.1 945.1 1520.0 941.4 C1520.9 937.7 1521.9 934.0 1522.8 930.2 C1523.8 926.5 1524.7 922.8 1525.6 919.1 C1526.6 915.4 1527.5 911.7 1528.4 908.0 C1529.4 904.2 1530.3 900.5 1531.2 896.8 C1532.2 893.1 1533.1 889.4 1534.0 885.7 C1534.9 881.9 1535.9 878.2 1536.8 874.5 C1537.7 870.8 1538.7 867.1 1539.6 863.4 C1540.5 859.6 1541.5 855.9 1542.4 852.2 C1543.3 848.5 1544.3 844.8 1545.2 841.1 C1546.1 837.4 1547.1 833.6 1548.0 829.9 C1548.9 826.2 1549.9 822.5 1550.8 818.8 C1551.8 815.1 1552.7 811.4 1553.6 807.6 C1554.6 803.9 1555.5 800.2 1556.5 796.5 C1557.4 792.8 1558.4 789.1 1559.3 785.4 C1560.3 781.7 1561.2 778.0 1562.2 774.2 C1563.1 770.5 1564.1 766.8 1565.0 763.1 C1566.0 759.4 1566.9 755.7 1567.9 752.0 C1568.9 748.3 1569.8 744.6 1570.8 740.9 C1571.8 737.2 1572.7 733.5 1573.7 729.8 C1574.7 726.1 1575.6 722.4 1576.6 718.7 C1577.6 715.0 1578.6 711.3 1579.6 707.6 C1580.6 703.9 1581.6 700.2 1582.6 696.5 C1583.5 692.8 1584.5 689.1 1585.5 685.4 C1586.6 681.7 1587.6 678.0 1588.6 674.3 C1589.6 670.6 1590.6 666.9 1591.6 663.2 C1592.6 659.5 1593.7 655.8 1594.7 652.1 C1595.7 648.5 1596.8 644.8 1597.8 641.1 C1598.8 637.4 1599.9 633.7 1600.9 630.0 C1602.0 626.3 1603.0 622.7 1604.1 619.0 C1605.2 615.3 1606.2 611.6 1607.3 608.0 C1608.4 604.3 1609.4 600.6 1610.5 596.9 C1611.6 593.3 1612.7 589.6 1613.8 585.9 C1614.9 582.3 1616.0 578.6 1617.2 574.9 C1618.3 571.3 1619.5 567.6 1620.6 564.0 C1621.8 560.3 1623.0 556.7 1624.2 553.1 C1625.5 549.5 1626.7 545.9 1628.0 542.3 C1629.3 538.7 1630.6 535.1 1632.0 531.5 C1633.4 527.9 1634.8 524.4 1636.2 520.8 C1637.7 517.3 1639.1 513.7 1640.7 510.2 C1642.2 506.7 1643.8 503.2 1645.5 499.8 C1647.3 496.4 1649.0 493.0 1651.0 489.7 C1653.0 486.4 1655.0 483.1 1657.3 480.0 C1659.6 476.9 1662.1 473.8 1664.8 471.0 C1667.5 468.3 1670.4 465.5 1673.6 463.6 C1676.8 461.7 1680.4 460.3 1684.0 459.6 C1687.6 459.0 1691.5 459.1 1695.1 459.8 C1698.8 460.5 1702.5 462.1 1705.9 463.7 C1709.3 465.4 1712.6 467.7 1715.7 469.9 C1718.8 472.1 1721.7 474.7 1724.6 477.2 C1727.5 479.7 1730.3 482.3 1733.2 484.9 C1736.1 487.4 1738.9 490.0 1741.9 492.5 C1744.9 494.9 1748.0 497.1 1751.1 499.4 C1754.3 501.6 1757.5 503.7 1760.7 505.8 C1763.9 508.0 1767.1 510.1 1770.2 512.3 C1773.3 514.6 1776.3 516.8 1779.2 519.2 C1782.2 521.7 1785.0 524.2 1787.6 526.9 C1790.2 529.7 1792.7 532.6 1795.0 535.6 C1797.3 538.7 1799.5 541.9 1801.5 545.1 C1803.6 548.4 1805.5 551.8 1807.3 555.2 C1809.2 558.6 1810.9 562.1 1812.5 565.6 C1814.1 569.0 1815.7 572.6 1817.1 576.1 C1818.6 579.6 1819.9 583.2 1821.3 586.8 C1822.6 590.4 1823.8 594.0 1825.0 597.6 C1826.2 601.2 1827.3 604.8 1828.5 608.5 C1829.6 612.1 1830.6 615.8 1831.7 619.4 C1832.8 623.1 1833.8 626.8 1834.8 630.5 C1835.8 634.1 1836.8 637.8 1837.9 641.5 C1838.9 645.2 1839.9 648.9 1840.9 652.6 C1841.9 656.3 1842.9 660.0 1843.9 663.7 C1845.0 667.4 1846.0 671.1 1847.0 674.8 C1848.0 678.5 1849.0 682.2 1850.0 685.9 C1851.0 689.6 1852.0 693.3 1853.0 697.0 C1854.0 700.7 1855.0 704.4 1856.0 708.1 C1857.0 711.8 1858.0 715.5 1859.0 719.3 C1860.0 723.0 1860.9 726.7 1861.9 730.4 C1862.9 734.1 1863.9 737.8 1864.9 741.5 C1865.8 745.2 1866.8 749.0 1867.8 752.7 C1868.8 756.4 1869.7 760.1 1870.7 763.8 C1871.7 767.5 1872.7 771.2 1873.6 774.9 C1874.6 778.6 1875.6 782.3 1876.6 786.0 C1877.5 789.7 1878.5 793.4 1879.5 797.1 C1880.5 800.8 1881.5 804.5 1882.4 808.2 C1883.4 811.9 1884.4 815.6 1885.4 819.3 C1886.4 823.0 1887.4 826.7 1888.4 830.4 C1889.4 834.1 1890.4 837.8 1891.4 841.5 C1892.4 845.2 1893.5 848.9 1894.5 852.6 C1895.5 856.3 1896.5 859.9 1897.6 863.6 C1898.6 867.3 1899.7 871.0 1900.7 874.7 C1901.8 878.3 1902.9 882.0 1903.9 885.7 C1905.0 889.4 1906.1 893.0 1907.2 896.7 C1908.3 900.4 1909.4 904.0 1910.5 907.7 C1911.6 911.3 1912.7 915.0 1913.9 918.7 C1915.0 922.3 1916.2 926.0 1917.3 929.6 C1918.5 933.3 1919.7 936.9 1920.8 940.6 C1922.0 944.2 1923.2 947.8 1924.4 951.5 C1925.6 955.1 1926.8 958.8 1928.0 962.4 C1929.3 966.0 1930.5 969.7 1931.7 973.3 C1932.9 976.9 1934.2 980.5 1935.4 984.2 C1936.7 987.8 1937.9 991.4 1939.2 995.0 C1940.4 998.7 1941.7 1002.3 1943.0 1005.9 C1944.2 1009.5 1945.5 1013.1 1946.8 1016.7 C1948.1 1020.4 1949.4 1024.0 1950.6 1027.6 C1951.9 1031.2 1953.2 1034.8 1954.5 1038.4 C1955.8 1042.0 1957.1 1045.6 1958.4 1049.2 C1959.7 1052.8 1961.0 1056.4 1962.3 1060.0 C1963.6 1063.6 1964.9 1067.3 1966.2 1070.9 C1967.5 1074.5 1968.8 1078.1 1970.1 1081.7 C1971.4 1085.3 1972.7 1088.9 1974.0 1092.5 C1975.3 1096.1 1976.6 1099.7 1977.9 1103.3 C1979.2 1106.9 1980.5 1110.5 1981.8 1114.0 C1983.1 1117.6 1984.4 1121.2 1985.7 1124.8 C1987.0 1128.4 1988.3 1132.0 1989.6 1135.6 C1990.9 1139.2 1992.3 1142.8 1993.6 1146.4 C1994.9 1150.0 1996.2 1153.6 1997.5 1157.2 C1998.9 1160.8 2000.2 1164.3 2001.5 1167.9 C2002.8 1171.5 2004.2 1175.1 2005.5 1178.7 C2006.9 1182.3 2008.2 1185.8 2009.6 1189.4 C2010.9 1193.0 2012.3 1196.6 2013.7 1200.2 C2015.0 1203.7 2016.4 1207.3 2017.8 1210.9 C2019.2 1214.5 2020.6 1218.0 2022.0 1221.6 C2023.4 1225.2 2024.8 1228.7 2026.2 1232.3 C2027.6 1235.9 2029.0 1239.4 2030.5 1243.0 C2031.9 1246.6 2033.3 1250.1 2034.8 1253.7 C2036.2 1257.2 2037.7 1260.8 2039.2 1264.4 C2040.7 1267.9 2042.2 1271.5 2043.7 1275.0 C2045.2 1278.5 2046.7 1282.1 2048.3 1285.6 C2049.9 1289.1 2051.5 1292.6 2053.1 1296.0 C2054.8 1299.5 2056.4 1303.0 2058.2 1306.4 C2059.9 1309.8 2061.7 1313.1 2063.6 1316.5 C2065.4 1319.8 2067.3 1323.1 2069.3 1326.3 C2071.3 1329.5 2073.4 1332.7 2075.5 1335.9 C2077.7 1339.0 2079.9 1342.1 2082.2 1345.1 C2084.5 1348.1 2086.9 1351.0 2089.4 1353.9 C2091.9 1356.8 2094.5 1359.6 2097.2 1362.3 C2099.8 1365.1 2102.6 1367.8 2105.4 1370.4 C2108.2 1373.0 2111.1 1375.6 2114.0 1378.1 C2117.0 1380.6 2120.0 1383.0 2123.0 1385.4 C2126.1 1387.8 2129.2 1390.1 2132.3 1392.4 C2135.4 1394.7 2138.6 1396.9 2141.8 1399.0 C2145.0 1401.2 2148.2 1403.3 2151.5 1405.4 C2154.7 1407.5 2158.0 1409.5 2161.3 1411.4 C2164.6 1413.4 2167.9 1415.3 2171.2 1417.1 C2174.6 1419.0 2178.0 1420.8 2181.4 1422.5 C2184.8 1424.3 2188.2 1426.0 2191.6 1427.6 C2195.1 1429.2 2198.5 1430.8 2202.0 1432.3 C2205.5 1433.8 2209.0 1435.3 2212.6 1436.7 C2216.1 1438.1 2219.7 1439.4 2223.2 1440.7 C2226.8 1442.0 2230.4 1443.2 2234.1 1444.4 C2237.7 1445.5 2241.3 1446.6 2245.0 1447.7 C2248.7 1448.7 2252.4 1449.7 2256.1 1450.6 C2259.8 1451.5 2263.5 1452.4 2267.3 1453.2 C2271.0 1454.0 2274.8 1454.7 2278.6 1455.4 C2282.4 1456.1 2286.2 1456.7 2290.0 1457.2 C2293.8 1457.8 2297.6 1458.3 2301.5 1458.8 C2305.3 1459.3 2309.1 1459.7 2313.0 1460.1 C2316.8 1460.5 2320.6 1460.9 2324.5 1461.2 C2328.3 1461.5 2332.1 1461.8 2335.9 1462.1 C2339.8 1462.3 2343.6 1462.5 2347.4 1462.8 C2351.2 1463.0 2355.0 1463.2 2358.8 1463.3 C2362.5 1463.5 2368.1 1463.6 2370.0 1463.6" fill="none" stroke="#3030b2" stroke-width="2.3" stroke-linejoin="round"/><rect x="958.8" y="326.0" width="1477.5000000000002" height="1138.0" fill="none" stroke="#000" stroke-width="2"/><g stroke="#000" stroke-width="2"><line x1="958.8" y1="1464.0" x2="958.8" y2="1472.8"/><line x1="1017.4" y1="1464.0" x2="1017.4" y2="1468.6"/><line x1="1076.5" y1="1464.0" x2="1076.5" y2="1468.6"/><line x1="1135.6" y1="1464.0" x2="1135.6" y2="1468.6"/><line x1="1194.7" y1="1464.0" x2="1194.7" y2="1468.6"/><line x1="1253.8" y1="1464.0" x2="1253.8" y2="1472.8"/><line x1="1312.9" y1="1464.0" x2="1312.9" y2="1468.6"/><line x1="1372.0" y1="1464.0" x2="1372.0" y2="1468.6"/><line x1="1431.1" y1="1464.0" x2="1431.1" y2="1468.6"/><line x1="1490.2" y1="1464.0" x2="1490.2" y2="1468.6"/><line x1="1549.3" y1="1464.0" x2="1549.3" y2="1472.8"/><line x1="1608.4" y1="1464.0" x2="1608.4" y2="1468.6"/><line x1="1667.5" y1="1464.0" x2="1667.5" y2="1468.6"/><line x1="1726.6" y1="1464.0" x2="1726.6" y2="1468.6"/><line x1="1785.7" y1="1464.0" x2="1785.7" y2="1468.6"/><line x1="1844.8" y1="1464.0" x2="1844.8" y2="1472.8"/><line x1="1903.9" y1="1464.0" x2="1903.9" y2="1468.6"/><line x1="1963.0" y1="1464.0" x2="1963.0" y2="1468.6"/><line x1="2022.1" y1="1464.0" x2="2022.1" y2="1468.6"/><line x1="2081.2" y1="1464.0" x2="2081.2" y2="1468.6"/><line x1="2140.3" y1="1464.0" x2="2140.3" y2="1472.8"/><line x1="2199.4" y1="1464.0" x2="2199.4" y2="1468.6"/><line x1="2258.5" y1="1464.0" x2="2258.5" y2="1468.6"/><line x1="2317.6" y1="1464.0" x2="2317.6" y2="1468.6"/><line x1="2376.7" y1="1464.0" x2="2376.7" y2="1468.6"/><line x1="2436.3" y1="1464.0" x2="2436.3" y2="1472.8"/><line x1="950.3" y1="1464.0" x2="958.8" y2="1464.0"/><line x1="954.3" y1="1369.2" x2="958.8" y2="1369.2"/><line x1="950.3" y1="1274.3" x2="958.8" y2="1274.3"/><line x1="954.3" y1="1179.5" x2="958.8" y2="1179.5"/><line x1="950.3" y1="1084.7" x2="958.8" y2="1084.7"/><line x1="954.3" y1="989.8" x2="958.8" y2="989.8"/><line x1="950.3" y1="895.0" x2="958.8" y2="895.0"/><line x1="954.3" y1="800.2" x2="958.8" y2="800.2"/><line x1="950.3" y1="705.3" x2="958.8" y2="705.3"/><line x1="954.3" y1="610.5" x2="958.8" y2="610.5"/><line x1="950.3" y1="515.7" x2="958.8" y2="515.7"/><line x1="954.3" y1="420.8" x2="958.8" y2="420.8"/><line x1="950.3" y1="326.0" x2="958.8" y2="326.0"/></g></svg>
<span class="t b" style="left:926.3px;top:1474px;font-size:24px;letter-spacing:0.5px;">-6700</span>
<span class="t b" style="left:1221.8px;top:1474px;font-size:24px;letter-spacing:0.5px;">-6675</span>
<span class="t b" style="left:1517.3px;top:1474px;font-size:24px;letter-spacing:0.5px;">-6650</span>
<span class="t b" style="left:1812.8px;top:1474px;font-size:24px;letter-spacing:0.5px;">-6625</span>
<span class="t b" style="left:2108.3px;top:1474px;font-size:24px;letter-spacing:0.5px;">-6600</span>
<span class="t b" style="left:2403.8px;top:1474px;font-size:24px;letter-spacing:0.5px;">-6575</span>
<span class="t b" style="left:934.8px;top:1454px;font-size:24px;letter-spacing:0.5px;">0</span>
<span class="t b" style="left:885.8px;top:1265px;font-size:24px;letter-spacing:0.5px;">0.005</span>
<span class="t b" style="left:899.8px;top:1075px;font-size:24px;letter-spacing:0.5px;">0.01</span>
<span class="t b" style="left:885.8px;top:885px;font-size:24px;letter-spacing:0.5px;">0.015</span>
<span class="t b" style="left:899.8px;top:696px;font-size:24px;letter-spacing:0.5px;">0.02</span>
<span class="t b" style="left:885.8px;top:506px;font-size:24px;letter-spacing:0.5px;">0.025</span>
<span class="t b" style="left:899.8px;top:316px;font-size:24px;letter-spacing:0.5px;">0.03</span>
<span class="t" style="left:1602.6px;top:1508px;font-size:26px;color:#111;letter-spacing:0.35px;">hcv<i class="us" style="width:13.0px"></i>coal.log</span>
<span class="t" style="left:767.2px;top:894.5px;width:200px;text-align:center;font-size:26px;color:#111;transform:rotate(-90deg);transform-origin:50% 50%;">Density</span>
<div class="btn2" style="left:866.4px;top:1560px;width:98.8px;height:53.7px;"></div>
<span class="t b2" style="left:870.0px;top:1574px;font-size:26px;color:#4a4a4a;letter-spacing:0.29px;">Setup...</span>
<span class="t b2" style="left:1004.0px;top:1576px;font-size:22px;color:#1c1c1c;transform:scaleX(1.0645);transform-origin:0 0;">Legend:</span>
<div class="combo" style="left:1100.3px;top:1563px;width:193px;height:44px;"></div>
<span class="t" style="left:1109.8px;top:1576px;font-size:22px;color:#474747;transform:scaleX(1.058);transform-origin:0 0;">None</span>
<svg style="left:1261px;top:1571px;width:20px;height:28px" viewBox="-10 -14 20 28"><path d="M-5.7 -3.6 L0 -8.9 L5.7 -3.6 M-5.7 3.6 L0 8.9 L5.7 3.6" fill="none" stroke="#5c5c5c" stroke-width="2.8" stroke-linecap="round" stroke-linejoin="round"/></svg>
<span class="t b2" style="left:1332.1px;top:1576px;font-size:22px;color:#1c1c1c;transform:scaleX(1.132);transform-origin:0 0;">Colour by:</span>
<div class="combo" style="left:1456.3px;top:1563px;width:263px;height:44px;"></div>
<span class="t" style="left:1467.1px;top:1576px;font-size:22px;color:#474747;transform:scaleX(1.0455);transform-origin:0 0;">Trace</span>
<svg style="left:1687px;top:1571px;width:20px;height:28px" viewBox="-10 -14 20 28"><path d="M-5.7 -3.6 L0 -8.9 L5.7 -3.6 M-5.7 3.6 L0 8.9 L5.7 3.6" fill="none" stroke="#5c5c5c" stroke-width="2.8" stroke-linecap="round" stroke-linejoin="round"/></svg>
</body>
</html>
